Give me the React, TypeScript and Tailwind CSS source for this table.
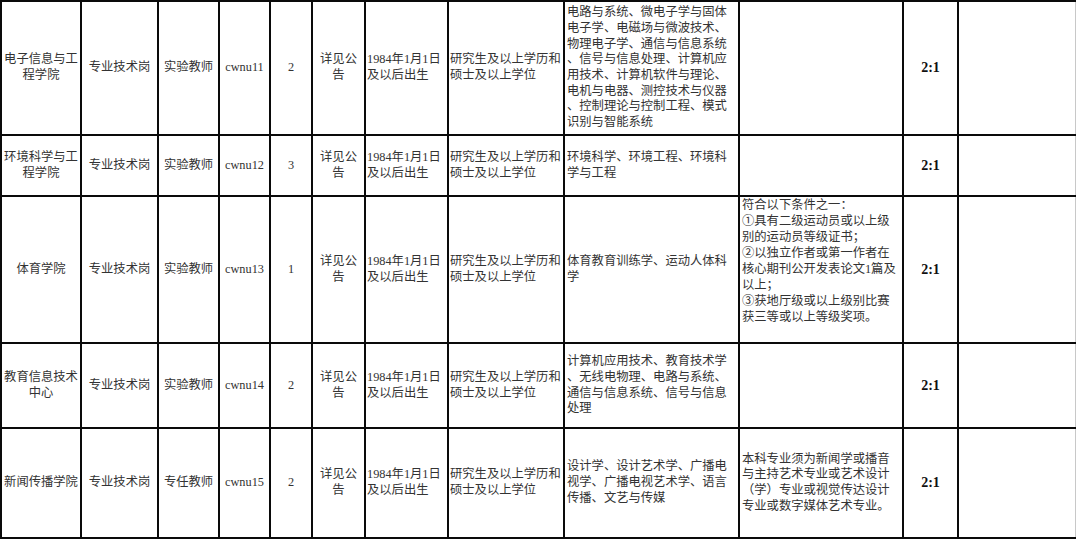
import React from "react";

type Row = {
  dept: string[];
  no: string;
  num: string;
  role: string;
  major: string[];
  cond: string[];
  condTop?: boolean;
};

const rows: Row[] = [
  {
    dept: ["电子信息与工", "程学院"],
    role: "实验教师",
    no: "cwnu11",
    num: "2",
    major: [
      "电路与系统、微电子学与固体",
      "电子学、电磁场与微波技术、",
      "物理电子学、通信与信息系统",
      "、信号与信息处理、计算机应",
      "用技术、计算机软件与理论、",
      "电机与电器、测控技术与仪器",
      "、控制理论与控制工程、模式",
      "识别与智能系统",
    ],
    cond: [],
  },
  {
    dept: ["环境科学与工", "程学院"],
    role: "实验教师",
    no: "cwnu12",
    num: "3",
    major: ["环境科学、环境工程、环境科", "学与工程"],
    cond: [],
  },
  {
    dept: ["体育学院"],
    role: "实验教师",
    no: "cwnu13",
    num: "1",
    major: ["体育教育训练学、运动人体科", "学"],
    cond: [
      "符合以下条件之一：",
      "①具有二级运动员或以上级",
      "别的运动员等级证书；",
      "②以独立作者或第一作者在",
      "核心期刊公开发表论文1篇及",
      "以上；",
      "③获地厅级或以上级别比赛",
      "获三等或以上等级奖项。",
    ],
    condTop: true,
  },
  {
    dept: ["教育信息技术", "中心"],
    role: "实验教师",
    no: "cwnu14",
    num: "2",
    major: [
      "计算机应用技术、教育技术学",
      "、无线电物理、电路与系统、",
      "通信与信息系统、信号与信息",
      "处理",
    ],
    cond: [],
  },
  {
    dept: ["新闻传播学院"],
    role: "专任教师",
    no: "cwnu15",
    num: "2",
    major: [
      "设计学、设计艺术学、广播电",
      "视学、广播电视艺术学、语言",
      "传播、文艺与传媒",
    ],
    cond: [
      "本科专业须为新闻学或播音",
      "与主持艺术专业或艺术设计",
      "（学）专业或视觉传达设计",
      "专业或数字媒体艺术专业。",
    ],
  },
];

function Lines({ lines }: { lines: string[] }) {
  return (
    <div>
      {lines.map((l, i) => (
        <div key={i} className="whitespace-nowrap">
          {l}
        </div>
      ))}
    </div>
  );
}

function CCell({ lines, extra = "" }: { lines: string[]; extra?: string }) {
  return (
    <div className={"bg-white flex items-center justify-center text-center " + extra}>
      <Lines lines={lines} />
    </div>
  );
}

function LCell({ lines, pad = "pl-[1px]", top = false }: { lines: string[]; pad?: string; top?: boolean }) {
  return (
    <div className={"bg-white flex " + (top ? "items-start pt-[0px] leading-[16px] " : "items-center ") + pad}>
      <Lines lines={lines} />
    </div>
  );
}

export default function App() {
  return (
    <div className="bg-white w-[1080px] h-[540px] overflow-hidden">
      <div
        className="grid w-fit bg-[#0a0a0a] gap-[2px] pt-[2px] pl-[2px] pb-[2px] pr-0 text-[12.3px] leading-[15.7px] text-[#333]"
        style={{ fontFamily: '"Liberation Serif", "Noto Sans CJK SC", serif' }}
      >
        <div className="grid grid-cols-[78px_75px_59px_49px_40px_51px_81px_114px_173px_162px_53px_117px] grid-rows-[132px_59px_145px_83px_108px] gap-[2px]">
          {rows.map((r, i) => (
            <React.Fragment key={i}>
              <CCell lines={r.dept} />
              <CCell lines={["专业技术岗"]} />
              <CCell lines={[r.role]} />
              <CCell lines={[r.no]} />
              <CCell lines={[r.num]} />
              <CCell lines={["详见公", "告"]} />
              <LCell lines={["1984年1月1日", "及以后出生"]} />
              <LCell lines={["研究生及以上学历和", "硕士及以上学位"]} />
              <LCell lines={r.major} pad="pl-[2px]" />
              <LCell lines={r.cond} pad="pl-[2px]" top={r.condTop} />
              <div className="bg-white flex items-center justify-center">
                <span className="font-bold text-[14px] text-[#111]">2:1</span>
              </div>
              <div className="bg-white border-r border-[#c8c8c8]" />
            </React.Fragment>
          ))}
        </div>
      </div>
    </div>
  );
}
